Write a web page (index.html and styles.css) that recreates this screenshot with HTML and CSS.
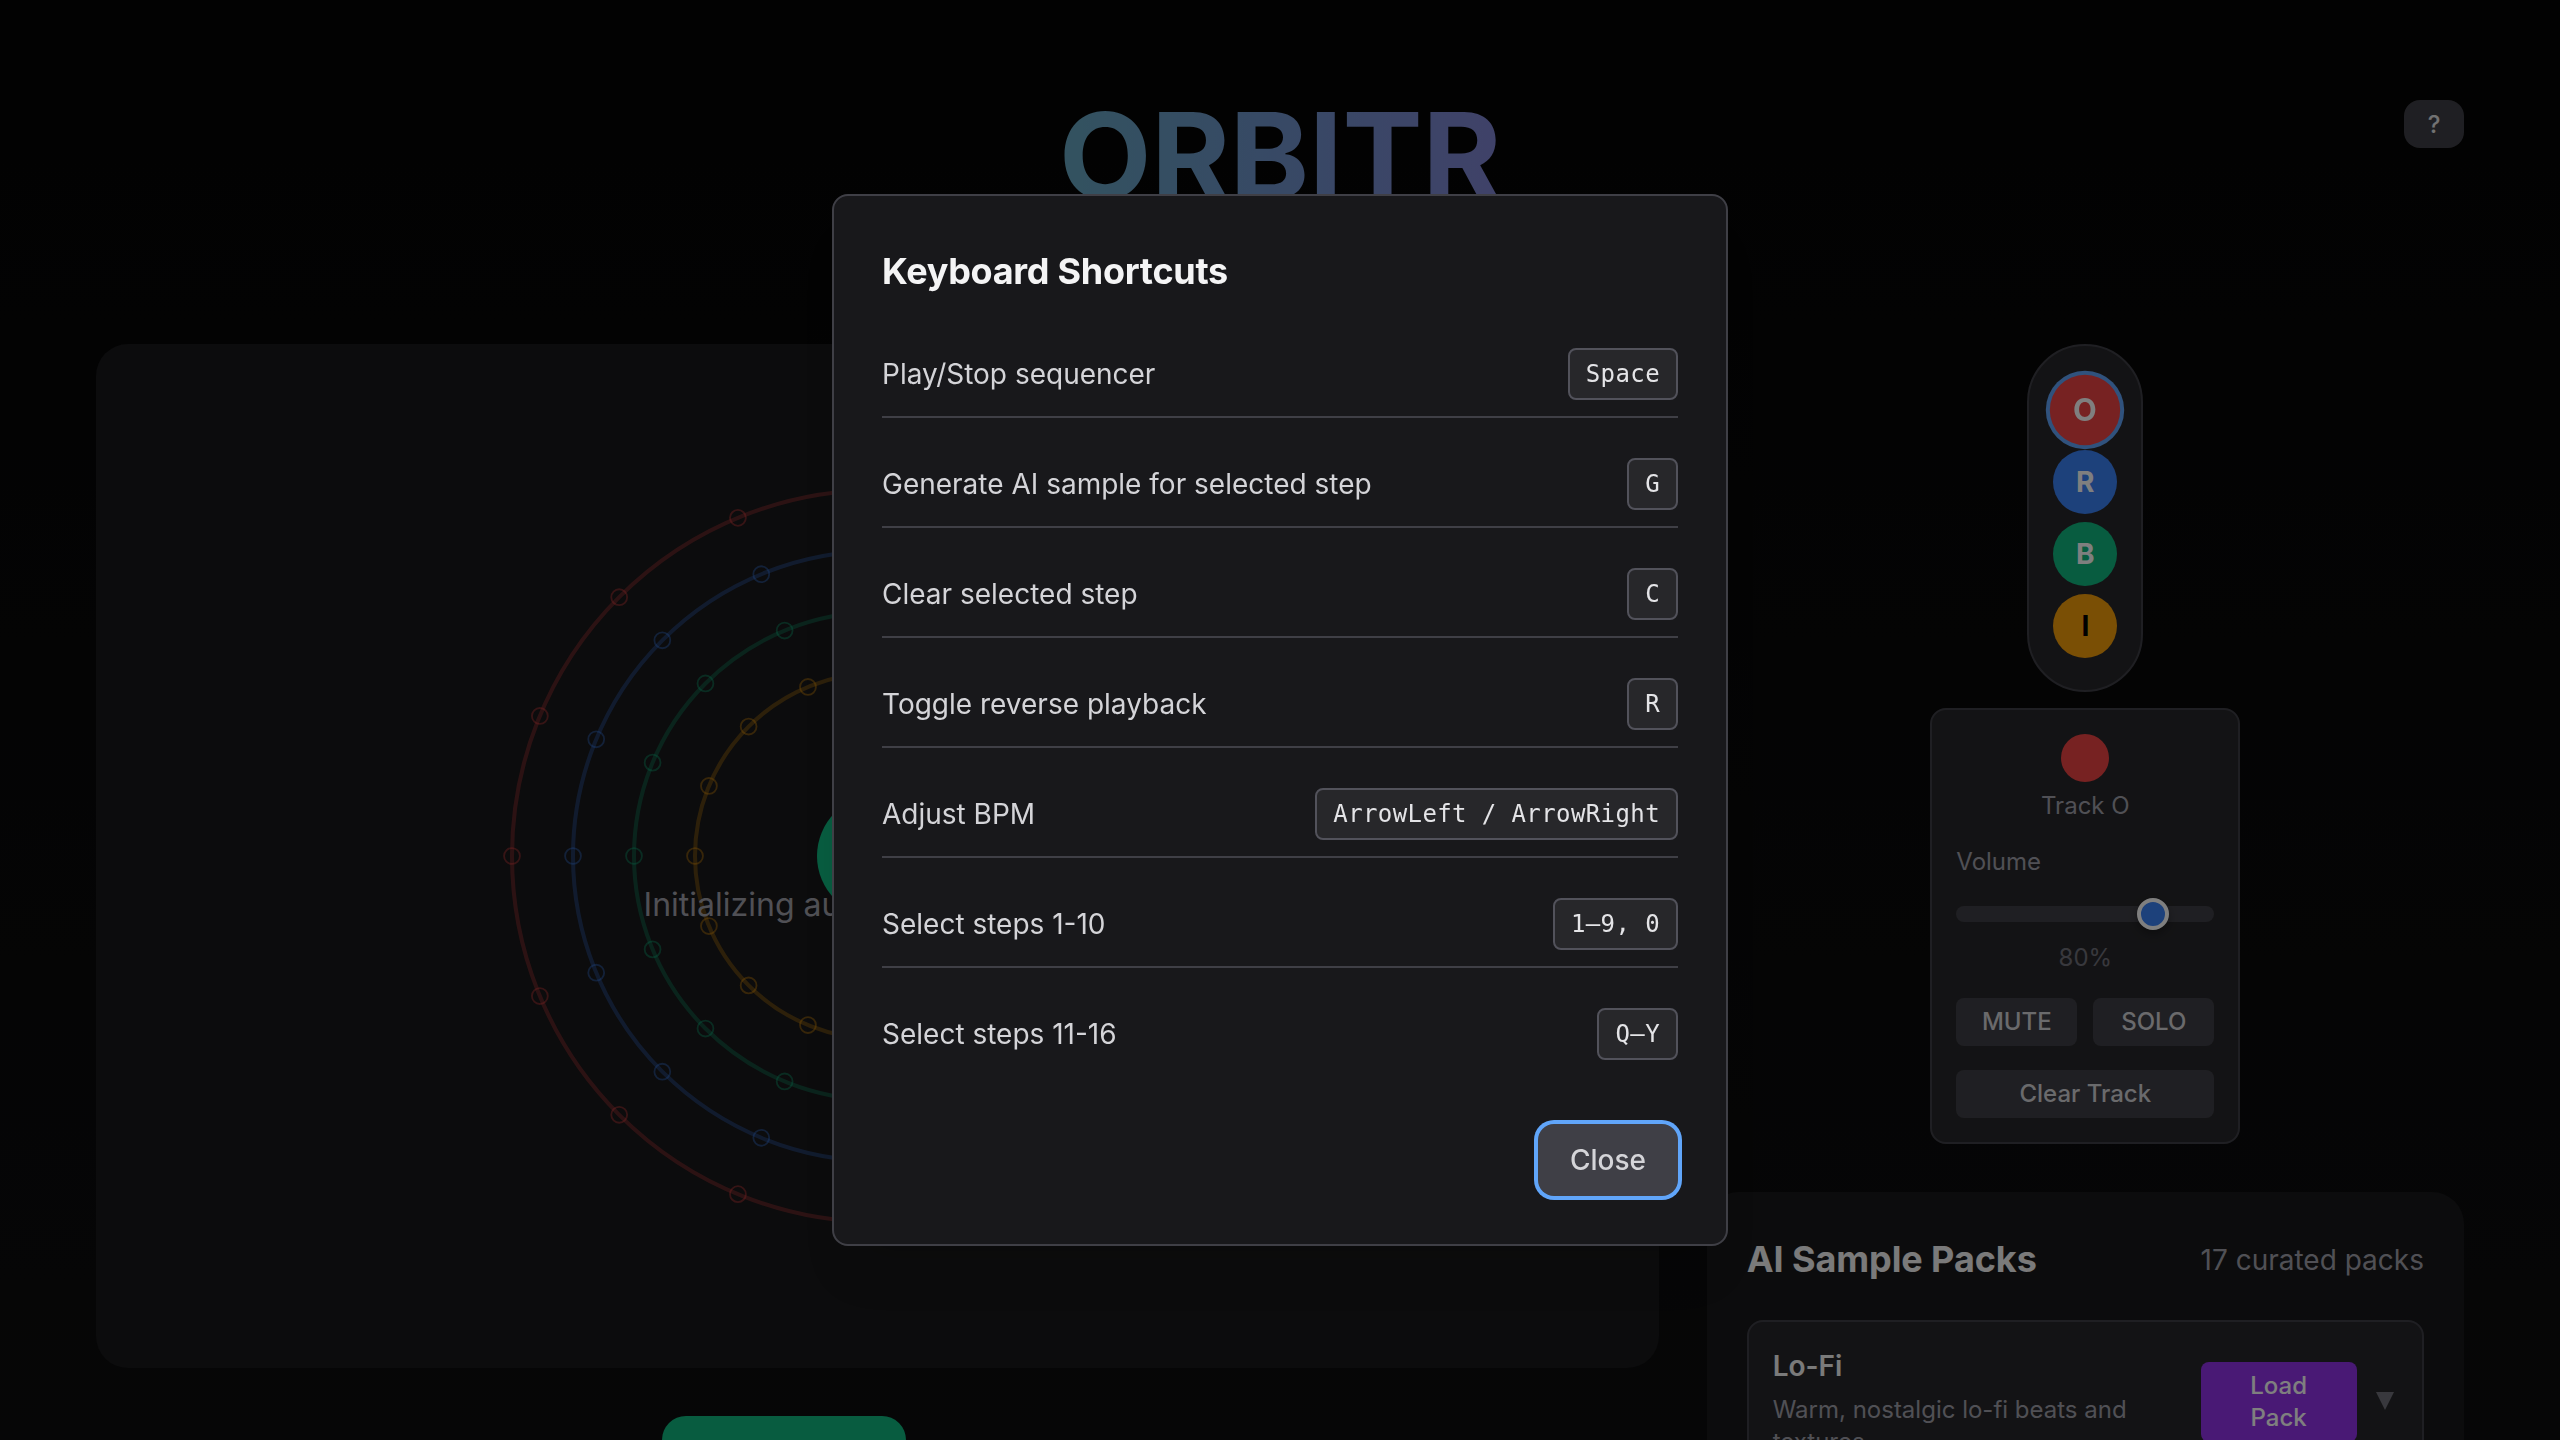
FILE: index.html
```html
<!DOCTYPE html>
<html lang="en">
<head>
<meta charset="utf-8">
<title>ORBITR</title>
<link rel="stylesheet" href="styles.css">
</head>
<body>
<div class="app">
  <header class="header">
    <h1 class="logo">ORBITR</h1>
    <button class="help">?</button>
  </header>
  <main class="columns">
    <section class="left">
      <div class="stage">
        <svg class="orbits" id="orbits" viewBox="0 0 800 800"></svg>
        <div class="loading">Initializing audio components...</div>
      </div>
      <div class="transport"><div class="play"></div></div>
    </section>
    <section class="right">
      <div class="tracks">
        <div class="track red active">O</div>
        <div class="track blue">R</div>
        <div class="track green">B</div>
        <div class="track amber">I</div>
      </div>
      <div class="mixer">
        <div class="dot"></div>
        <div class="track-name">Track O</div>
        <div class="label">Volume</div>
        <div class="slider"><div class="thumb"></div></div>
        <div class="percent">80%</div>
        <div class="pair"><button class="btn">MUTE</button><button class="btn">SOLO</button></div>
        <button class="btn clear">Clear Track</button>
      </div>
      <div class="packs">
        <div class="packs-head"><h2>AI Sample Packs</h2><span>17 curated packs</span></div>
        <div class="pack">
          <div class="pack-text"><h3>Lo-Fi</h3><p>Warm, nostalgic lo-fi beats and textures</p></div>
          <button class="load">Load Pack</button>
          <svg class="caret" viewBox="0 0 18 18"><path d="M0 0h18L9 18z"/></svg>
        </div>
      </div>
    </section>
  </main>
</div>
<div class="overlay">
  <div class="modal">
    <h2 class="modal-title">Keyboard Shortcuts</h2>
    <div class="rows">
      <div class="row"><span>Play/Stop sequencer</span><kbd>Space</kbd></div>
      <div class="row"><span>Generate AI sample for selected step</span><kbd>G</kbd></div>
      <div class="row"><span>Clear selected step</span><kbd>C</kbd></div>
      <div class="row"><span>Toggle reverse playback</span><kbd>R</kbd></div>
      <div class="row"><span>Adjust BPM</span><kbd>ArrowLeft / ArrowRight</kbd></div>
      <div class="row"><span>Select steps 1-10</span><kbd>1–9, 0</kbd></div>
      <div class="row"><span>Select steps 11-16</span><kbd>Q–Y</kbd></div>
    </div>
    <div class="actions"><button class="close">Close</button></div>
  </div>
</div>
<script src="orbits.js"></script>
</body>
</html>
```
FILE: styles.css
```css
* { box-sizing: border-box; margin: 0; padding: 0; }
body {
  width: 2560px; height: 1440px; overflow: hidden;
  background: linear-gradient(180deg, #040404, #0d0d0e);
  font-family: Inter, "Liberation Sans", sans-serif;
  color: #f4f4f5;
}
button { border: 0; font: inherit; color: inherit; }
.app { height: 1440px; padding: 96px 96px 0; overflow: hidden; }
.header { position: relative; height: 248px; display: flex; justify-content: center; }
.logo {
  height: 120px; font-size: 120px; line-height: 120px; font-weight: 700; letter-spacing: -.2px;
  background: linear-gradient(90deg, #66a6c0, #6e94ca 45%, #8084d2);
  -webkit-background-clip: text; background-clip: text; color: transparent;
}
.help {
  position: absolute; right: 0; top: 4px; width: 60px; height: 48px;
  border-radius: 16px; background: #3f3f46; color: #e4e4e7; font-size: 24px; font-weight: 500;
}
.columns { display: grid; grid-template-columns: 1563px 757.33px; gap: 47.67px; }
.stage {
  position: relative; height: 1024px; padding: 24px; border-radius: 32px;
  background: #18181a; display: flex; justify-content: center;
}
.orbits { width: 976px; height: 976px; }
.orbit { fill: none; stroke-width: 3.3; opacity: .3; }
.step { fill: none; stroke-width: 1.5; opacity: .4; }
.loading {
  position: absolute; left: 0; right: 0; top: 541px; text-align: center;
  font-size: 32px; line-height: 40px; color: #a1a1aa;
}
.transport { margin-top: 48px; padding-left: 566px; }
.play { width: 244px; height: 96px; border-radius: 24px; background: #10b981; }
.right { display: flex; flex-direction: column; align-items: center; }
.tracks {
  width: 116px; height: 348px; padding: 32px 24px; border: 2px solid #3f3f46;
  border-radius: 58px; background: #27272a; display: flex; flex-direction: column; gap: 8px;
  align-items: center; flex: none;
}
.track {
  width: 64px; height: 64px; border-radius: 50%; font-size: 28px; font-weight: 700;
  display: flex; align-items: center; justify-content: center; color: #fff; flex: none;
}
.red { background: #ef4444; }
.blue { background: #3b82f6; }
.green { background: #10b981; }
.amber { background: #f59e0b; color: #000; }
.active { transform: scale(1.1); box-shadow: 0 0 0 3.64px #60a5fa; }
.mixer {
  width: 310px; height: 436px; margin-top: 16px; padding: 24px; border: 2px solid #3f3f46;
  border-radius: 16px; background: #27272a; font-size: 24px; line-height: 32px; flex: none;
  display: flex; flex-direction: column;
}
.dot { width: 48px; height: 48px; border-radius: 50%; background: #ef4444; align-self: center; }
.track-name { margin-top: 8px; text-align: center; color: #a1a1aa; }
.label { margin-top: 24px; color: #a1a1aa; }
.slider { height: 16px; margin-top: 28px; border-radius: 8px; background: #3f3f46; padding-left: 181px; }
.thumb {
  width: 32px; height: 32px; margin-top: -8px; border: 4px solid #fff; border-radius: 50%;
  background: #3b82f6; box-shadow: 0 4px 8px rgba(0,0,0,.3);
}
.percent { margin-top: 20px; text-align: center; color: #71717a; }
.pair { margin-top: 24px; display: grid; grid-template-columns: 1fr 1fr; gap: 16px; }
.btn { height: 48px; border-radius: 8px; background: #3f3f46; color: #d4d4d8; font-weight: 500; }
.clear { margin-top: 24px; }
.packs { width: 757.33px; height: 400px; margin-top: 48px; padding: 40px; border-radius: 32px; background: #18181a; flex: none; }
.packs-head { height: 56px; display: flex; justify-content: space-between; align-items: center; }
.packs-head h2 { font-size: 36px; line-height: 52px; padding-bottom: 3px; font-weight: 700; letter-spacing: -.08px; }
.packs-head span { font-size: 28px; color: #a1a1aa; }
.pack {
  margin-top: 32px; height: 200px; padding: 24px; border: 2px solid #3f3f46; border-radius: 16px;
  background: #27272a; display: flex; align-items: flex-start;
}
.pack-text { width: 404px; margin-right: 24px; }
.pack h3 { font-size: 28px; line-height: 40px; font-weight: 600; }
.pack p { margin-top: 8px; font-size: 24px; line-height: 32px; color: #a1a1aa; }
.load {
  width: 156px; height: 80px; margin-top: 16px; padding: 8px 40px; border-radius: 8px;
  background: #9333ea; color: #fff; font-size: 24px; line-height: 32px; font-weight: 500;
}
.caret { width: 18px; height: 18px; margin: 46px 0 0 19px; fill: #71717a; }
.overlay {
  position: fixed; inset: 0; background: rgba(0,0,0,.5);
  display: flex; align-items: center; justify-content: center;
}
.modal {
  width: 896px; height: 1052px; padding: 48px; border: 2px solid #3f3f46; border-radius: 16px;
  background: #18181b; box-shadow: 0 40px 50px -10px rgba(0,0,0,.1);
}
.modal-title { font-size: 36px; line-height: 54px; font-weight: 700; letter-spacing: -.28px; margin-bottom: 34px; }
.rows { display: flex; flex-direction: column; gap: 24px; }
.row {
  height: 86px; padding: 16px 0; border-bottom: 2px solid #3f3f46;
  display: flex; justify-content: space-between; align-items: center;
  font-size: 28px; color: #d4d4d8;
}
.row:last-child { height: 84px; border: 0; }
kbd {
  height: 52px; padding: 8px 16px; border: 2px solid #52525b; border-radius: 8px; background: #27272a;
  font: 24px/32px "DejaVu Sans Mono", monospace; letter-spacing: .4px; color: #e4e4e7;
}
.actions { margin-top: 48px; display: flex; justify-content: flex-end; }
.close {
  height: 72px; padding: 0 32px; border-radius: 16px; background: #3f3f46; color: #d4d4d8;
  font-size: 28px; font-weight: 500; box-shadow: 0 0 0 4px #60a5fa;
}
```
FILE: orbits.js
```js
const NS = "http://www.w3.org/2000/svg";
const svg = document.getElementById("orbits");
const add = (cls, cx, cy, r, attrs) => {
  const c = document.createElementNS(NS, "circle");
  c.setAttribute("class", cls);
  c.setAttribute("cx", cx);
  c.setAttribute("cy", cy);
  c.setAttribute("r", r);
  for (const k in attrs) c.setAttribute(k, attrs[k]);
  svg.appendChild(c);
};
[[300, "#ef4444"], [250, "#3b82f6"], [200, "#10b981"], [150, "#f59e0b"]].forEach(([r, color]) => {
  add("orbit", 400, 400, r, { stroke: color });
  for (let i = 0; i < 16; i++) {
    const a = i * Math.PI / 8;
    add("step", 400 + r * Math.cos(a), 400 + r * Math.sin(a), 6.5, { stroke: color });
  }
});
add("hub", 400, 400, 50, { fill: "#10b981" });
```
